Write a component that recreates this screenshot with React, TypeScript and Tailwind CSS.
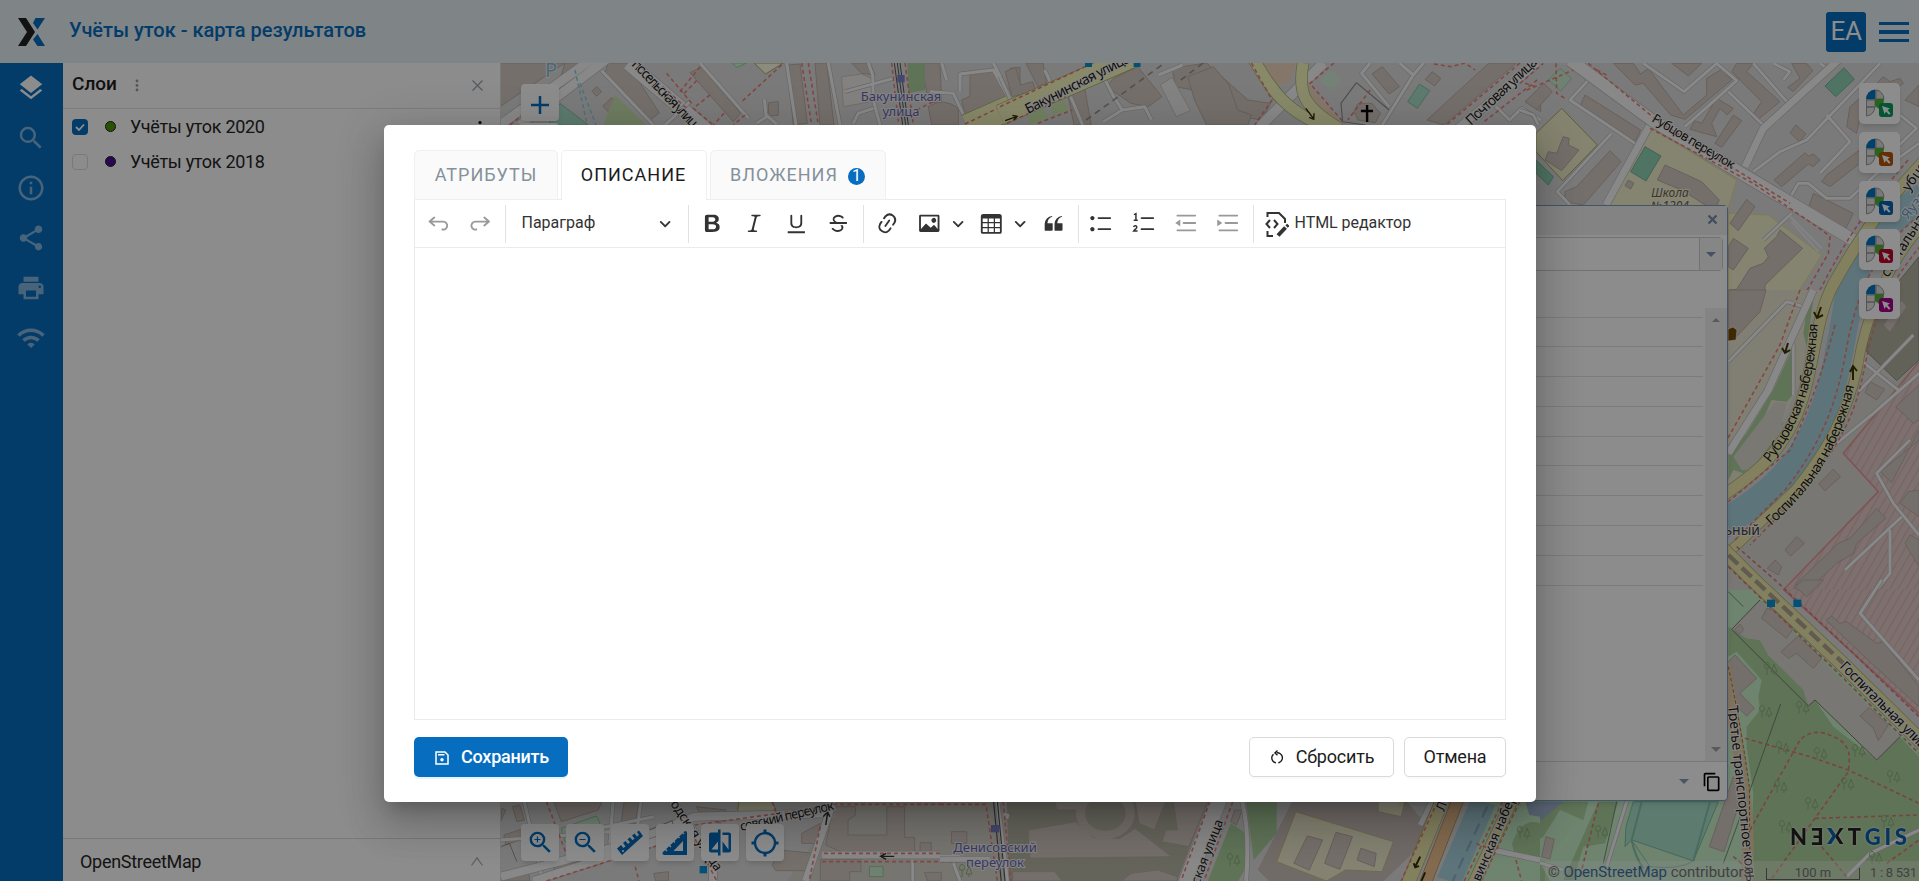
import React from "react";
import { MdLayers, MdSearch, MdInfoOutline, MdShare, MdPrint, MdWifi, MdContentCopy, MdZoomIn, MdZoomOut } from "react-icons/md";

type PathProps = { d: string };

/* ---------- map primitives ---------- */
const Building = ({ d }: PathProps) => <path d={d} fill="#d5cac3" stroke="#bdafa6" strokeWidth="1" vectorEffect="non-scaling-stroke" />;
const Area = ({ d, fill, stroke = "none" }: PathProps & { fill: string; stroke?: string }) => (
  <path d={d} fill={fill} stroke={stroke} strokeWidth="1" vectorEffect="non-scaling-stroke" />
);
const Road = ({ d, w = 3, fill = "#f8f8f8", casing = "#bdbdbd" }: PathProps & { w?: number; fill?: string; casing?: string }) => (
  <g fill="none" strokeLinejoin="round">
    <path d={d} stroke={casing} strokeWidth={w + 1.4} vectorEffect="non-scaling-stroke" />
    <path d={d} stroke={fill} strokeWidth={w} vectorEffect="non-scaling-stroke" />
  </g>
);
const Foot = ({ d, c = "#ee8179" }: PathProps & { c?: string }) => (
  <path d={d} fill="none" stroke={c} strokeWidth="1.6" strokeDasharray="4 3" vectorEffect="non-scaling-stroke" />
);
const Label = ({ x, y, r = 0, len, c = "#1c1c1c", size = 14, children, anchor = "start", italic = false }: {
  x: number; y: number; r?: number; len?: number; c?: string; size?: number; children: string; anchor?: "start" | "middle" | "end"; italic?: boolean;
}) => (
  <text x={x} y={y} transform={`rotate(${r} ${x} ${y})`} textLength={len} fontSize={size} fill={c} stroke="#f3f1ee" strokeWidth="2"
    paintOrder="stroke" textAnchor={anchor} fontStyle={italic ? "italic" : "normal"}>{children}</text>
);
const Tree = ({ x, y }: { x: number; y: number }) => (
  <path d={`M${x} ${y}v-7m-2 0a2.5 3.5 0 1 1 4 0zM${x + 7} ${y}v-3l-3 0 3-8 3 8h-3`} fill="none" stroke="#8fb481" strokeWidth="1" />
);

const northWest = "translate(500 60) scale(.33333)";
const north = "translate(1000 60) scale(.34437 .33333)";
const northEast = "translate(1520 0) scale(.33333)";
const east = "translate(1520 290) scale(.33333)";
const southEast = "translate(1520 580) scale(.33333)";
const southWest = "translate(380 700) scale(.36995 .33333)";
const south = "translate(940 700) scale(.38265 .33333)";

function MapCanvas() {
  return (
    <svg className="block h-full w-full" viewBox="501 63 1418 818" preserveAspectRatio="none" fontFamily="'Noto Sans', sans-serif">
      <defs>
        <path id="leftBank" d="M1770 463C1800 425 1815 385 1818 318" />
        <path id="rightBank" d="M1771 526C1818 485 1843 440 1855 382" />
        <pattern id="hatch" width="21" height="21" patternUnits="userSpaceOnUse" patternTransform="rotate(-60)">
          <rect width="21" height="21" fill="#e3ccc9" /><path d="M0 2H21" stroke="#d8b6b3" strokeWidth="3.5" />
        </pattern>
      </defs>
      <rect x="500" y="60" width="1419" height="821" fill="#e0dfdf" />

      <g transform={northWest}>
        <Building d="M0 9H195L0 140Z" />
        <Building d="M195 9H280L200 98 175 72Z" />
        <Building d="M380 9H325L315 38 445 185 478 158Z" />
        <Building d="M605 22L570 38 700 185 722 160Z" />
        <Building d="M290 80L305 95 290 109 276 94ZM335 113L360 138 335 165 308 139Z" />
        <Building d="M862 15L900 12 922 190 880 195ZM945 9H980L1002 195H960Z" />
        <Building d="M805 128L835 125V166L806 168ZM1055 9H1110L1125 45 1085 40Z" />
        <Building d="M1265 9H1320L1325 130 1285 125Z" />
        <Building d="M1410 38L1490 25 1540 110 1400 185 1385 120 1410 108ZM1530 25L1560 22V90Z" />
        <Building d="M1285 140Q1330 110 1375 145V195H1295Z" />
        <Area d="M1025 50L1085 42 1115 55V125L1030 140Z" fill="#efedea" stroke="#cfc5be" />
        <Area d="M345 105L440 195H310Z" fill="#c9e2b0" />
        <Area d="M1222 9H1275V90L1225 100Z" fill="#add19e" />
        <Area d="M150 185L180 130 265 195H145Z" fill="#aae0cb" stroke="#8cbfa8" />
        <Area d="M762 9L797 42 850 9Z" fill="#ffffe5" stroke="#aaa66a" />
        <Area d="M695 9L712 22 740 9Z" fill="#c8facc" stroke="#8fd39b" />
        <Road d="M0 195L300 -20M60 195L330 -10" w={9} />
        <Road d="M385 9L620 210" w={14} />
        <Road d="M305 32L460 195M600 9L745 175M495 195L570 125M793 118L798 165 830 192M770 190L800 170M860 9L888 195M985 9L1020 195" w={3} />
        <Road d="M1035 95L1180 55M1105 9L1118 45 1120 120 1140 195M1060 190L1075 160 1120 145M1325 9L1340 60M1380 95V42L1480 30 1540 140M1290 95L1360 100 1400 185M1480 9L1560 165" w={3} />
        <Road d="M1400 200L1560 130" w={24} fill="#f7fabf" casing="#a9b070" />
        <path d="M1183 9L1208 195M1192 9L1217 195M1200 9L1225 195" stroke="#555" strokeWidth="3" fill="none" />
        <Foot d="M410 9L560 145M600 20L540 95M500 40L575 130M590 62L548 105M630 105L580 145 640 195M672 160L640 195M735 165L700 195M845 15L725 125M905 9L935 195M925 9L955 195M1175 9L1195 185M1215 9L1240 195M1395 192L1555 115M1250 150L1300 125M30 195L120 120" />
        <Foot d="M225 30L262 195M240 70L288 195" c="#8fd0de" />
        <rect x="1192" y="45" width="22" height="22" fill="#7a82c8" />
      </g>
      <Label x={545} y={77} c="#84bfe0" size={20}>P</Label>
      <Label x={631} y={65} r={46} len={88}>посельская улиц</Label>
      <Label x={901} y={101} anchor="middle" c="#6468b8" size={13}>Бакунинская</Label>
      <Label x={901} y={116} anchor="middle" c="#6468b8" size={13}>улица</Label>

      <g transform={north}>
        <Building d="M15 35L45 22 60 75 95 65 105 95 35 110ZM75 9H125L135 70 110 80Z" />
        <Building d="M195 95L245 80 265 195H215ZM330 55L400 20 470 110 430 140 380 130 310 80Z" />
        <Building d="M500 25L600 9 720 120 785 130 760 180 640 160 560 90 510 80Z" />
        <Building d="M545 50L620 20 665 75 690 150 730 165 720 195H600L565 120Z" />
        <Building d="M1080 42L1110 20 1160 80 1130 102Z" />
        <Building d="M1240 180L1420 9H1500L1290 195Z" />
        <Building d="M1255 35L1280 55 1262 78 1235 58ZM1570 85L1525 125 1570 155Z" />
        <Building d="M1040 130L1080 130 1105 160 1090 188 1040 180 1028 155Z" />
        <Area d="M465 75L500 52 553 152 512 170Z" fill="#efefef" stroke="#cfc5be" />
        <Area d="M960 30L990 60 960 92 930 60Z" fill="#d2ecd9" />
        <Area d="M1218 72L1248 92 1212 145 1184 125Z" fill="#aae0cb" stroke="#8cbfa8" />
        <Area d="M145 140L185 120 200 150 155 170ZM80 165L125 145 145 175 85 195Z" fill="#cdebb0" />
        <Area d="M755 9H860L840 70 800 75ZM895 70L990 185H960L890 110Z" fill="#f1d9bf" />
        <path d="M1035 68L1130 150M1035 68L990 130 995 185 1060 195" stroke="#888" strokeWidth="3" fill="none" />
        <Road d="M0 50L35 130M130 30L150 75M205 110L240 195M300 50L330 110 355 150 300 185M355 150L420 140 440 180M460 45L530 15M1075 9L1050 40 1130 140M1160 9L1200 45 1110 195M1230 9L1200 45M1440 140L1480 180 1515 145 1570 180" w={3} />
        <Road d="M0 165L390 -10" w={20} fill="#f7fabf" casing="#a9b070" />
        <Road d="M870 80L750 205M940 9L890 60" w={10} />
        <Road d="M735 -5C790 90 830 160 960 205M880 9C865 100 880 140 985 205" w={11} fill="#f7fabf" casing="#a9b070" />
        <Road d="M1560 9L1330 205" w={8} />
        <path d="M250 180L470 15M525 60L590 9" stroke="#9b9490" strokeWidth="5" strokeDasharray="18 14" fill="none" />
        <Foot d="M0 140L270 9M20 190L190 110M110 190L210 150M730 9L790 120 740 195M970 9L900 70 1000 190M1075 90L1010 180M1260 12L1310 20 1350 9 1380 30M1510 9L1290 200M1560 60L1400 190M1525 70L1570 85" />
        <rect x="247" y="8" width="20" height="13" fill="#0092da" /><rect x="388" y="8" width="20" height="13" fill="#0092da" />
        <path d="M1066 135V186M1048 153H1083" stroke="#000" strokeWidth="7" />
        <path d="M15 182L48 170M36 166L50 169 40 180M888 145L910 175M898 172L911 178 912 160" stroke="#332a00" strokeWidth="4" fill="none" />
      </g>
      <Label x={1028} y={114} r={-27} len={116}>Бакунинская улица</Label>
      <Label x={1471} y={126} r={-43} len={92}>Почтовая улица</Label>

      <g transform={northEast}>
        <Area d="M395 385L650 540 620 640 745 645 905 765 820 900H625V640H250Z" fill="#f3f0cd" stroke="#e8df8e" />
        <Area d="M125 325L232 435 128 542 48 455V400Z" fill="#f3f0cd" stroke="#a8ac60" />
        <Building d="M280 190L340 190 362 222 385 205 490 345 560 285 560 235 605 208 635 240 495 358 452 345 370 250 345 255Z" />
        <Building d="M455 190H545L505 228ZM650 190H700L680 215 780 305 710 362 695 350 725 305 635 215Z" />
        <Building d="M815 190H860L878 212 820 275 803 262 840 235ZM195 285L362 390 345 425 182 315Z" />
        <Building d="M72 250L97 275 50 328 15 305ZM590 295L640 325 622 345 600 325 575 370 590 410 510 388 525 362 545 370ZM640 345L665 362 605 442 585 430Z" />
        <Building d="M828 375L858 402 838 425 810 398ZM762 540L855 458 865 468 880 462 900 480 880 500 865 492 785 560Z" />
        <Building d="M1025 445L1045 470 930 560 905 545 920 525Z" />
        <Building d="M270 452L303 485 190 615 135 605 135 575 170 560Z" />
        <Building d="M435 495L545 545 598 600 590 618H560L485 570 412 540Z" />
        <Building d="M880 580L960 620 1000 640 970 700 865 625ZM680 598L705 620 655 692 630 670Z" />
        <Building d="M640 715L685 745 640 810 625 800V740ZM780 690L848 745 735 855V900H625V870L650 868 690 805 730 790 745 770 733 745 770 710Z" />
        <Building d="M1060 260L1090 230 1110 245 1140 235 1150 250 1120 275 1070 262 1030 300 1010 400 980 380 990 320ZM1155 300L1197 255V320Z" />
        <Building d="M130 410L148 415 145 435 177 450 125 512 75 480 85 455 110 460ZM325 540L342 550 332 567 315 557Z" />
        <Area d="M375 440L423 468 378 543 332 515ZM972 203L1003 238 947 290 915 258ZM48 480L100 530 85 555 48 520Z" fill="#92d3b5" stroke="#76b69a" />
        <Area d="M120 205L155 235 122 273 85 240Z" fill="#c9ecd0" stroke="#9bd8a8" />
        <Road d="M210 235L150 300 345 430M275 400L112 575 150 615M370 190L492 275 590 190 650 242 495 380M625 275L740 385M700 190L805 310M700 515L780 455 860 420 1080 190M920 345L990 425 900 520M800 610L835 550 865 550 920 595 990 595 1065 525 1197 430M1140 345L1190 385 1060 510M900 190L920 205M760 190L810 215 790 240M0 330L40 345 55 375M730 720L815 640" w={2.8} />
        <Road d="M395 365L258 615M1010 130L730 385 675 500" w={7} />
        <Road d="M150 180L395 360 1000 720" w={12} />
        <Foot d="M205 190L415 365 810 610M390 385L700 550 905 690 930 710 925 760 845 900M0 250L70 190M20 270L160 210M108 190L110 280 135 295M230 210L260 225" />
        <path d="M805 645L905 745M815 665L895 755" stroke="#eee" strokeWidth="6" />
      </g>
      <Label x={1651} y={121} r={31} len={94} size={13}>Рубцов переулок</Label>
      <Label x={1670} y={197} anchor="middle" c="#72651f" size={12} italic>Школа</Label>
      <Label x={1670} y={210} anchor="middle" c="#72651f" size={12} italic>№1204</Label>

      <g transform={east}>
        <Area d="M625 0H920L860 120 850 250 760 460 625 590Z" fill="#ebe8d2" />
        <Building d="M625 0H738L720 65 640 150 625 110Z" />
        <Area d="M880 30L860 60 850 130 860 170ZM820 170L822 310 800 335 755 330 735 375 790 400 755 470 670 550 640 540 625 570V495L680 430 760 300Z" fill="#add19e" />
        <Area d="M765 335L800 340 780 430 690 540 665 540 640 500Z" fill="#dddad2" />
        <Area d="M1050 80L1197 -100V210L1130 272 1040 185Z" fill="#b5b2a0" stroke="#8b927b" />
        <Area d="M1015 210L1130 275 1197 220V610L790 900H625V790L740 700 950 430Z" fill="#dcd9d1" />
        <Area d="M1197 220L970 490 1075 605 790 900H1197Z" fill="url(#hatch)" />
        <path d="M1197 215L970 490 1075 605 790 900" fill="none" stroke="#e39b99" strokeWidth="5" />
        <Building d="M1050 275L1094 298 1070 330 1035 308ZM940 538L962 560 915 602 896 582ZM830 740L853 760 812 798 795 780Z" />
        <Building d="M765 810L785 830 775 855 742 835ZM1197 285V390L1180 400 1127 350ZM1197 420L1115 578 1082 545 1197 450Z" />
        <Building d="M1070 655L1097 685 1010 760 1000 790 950 820 865 900H825L830 880 955 760 990 745ZM1197 600V680L1140 640 1165 605ZM1197 750L1170 735 1155 760 1197 830ZM1145 30L1160 50 1110 127 1090 105Z" />
        <Road d="M820 160V315M1180 135L1015 305M1015 205L1135 300M1197 250L1060 370 950 460M1170 450L1070 550 1120 640 1197 735M1145 680L975 840M1110 720V850L1070 900" w={2.8} />
        <Road d="M625 215L800 35 850 50" w={2.8} />
        <Road d="M880 0L745 300 625 490" w={7} />
      </g>
      <path d="M1925 196C1880 228 1862 240 1850 290C1838 360 1832 420 1790 470C1765 500 1735 515 1700 540" stroke="#aad3df" strokeWidth="28" fill="none" />
      <Road d="M1925 160C1880 208 1858 240 1833 285C1812 325 1815 380 1792 425C1776 455 1758 475 1700 510" w={11} fill="#eeeaad" casing="#a9b070" />
      <Road d="M1925 222C1890 260 1865 315 1857 370C1848 410 1828 450 1795 490L1725 556" w={9} fill="#eeeaad" casing="#a9b070" />
      <Foot d="M1925 212C1885 240 1862 275 1848 340C1838 400 1824 440 1785 490L1735 540M1908 160C1870 205 1848 235 1820 290M1835 325C1820 380 1812 400 1790 450L1728 502M1925 240C1885 290 1876 310 1864 370C1852 430 1830 465 1750 545M1800 290L1780 345 1728 438" />
      <path d="M1821 307l-4 11m-3-6 3 6 6-3M1788 343l-3 10m-3-5 3 5 5-3M1853 380v-13m-3 5 3-6 4 5" stroke="#3c3500" strokeWidth="2" fill="none" />
      <path d="M1728 329l5-2 4 3-1 10-8 1z" fill="#734a08" stroke="#fff" strokeWidth=".6" />
      <g fontSize="14" fill="#1c1c1c" stroke="#f2efc0" strokeWidth="1.5" paintOrder="stroke">
        <text><textPath href="#leftBank" textLength="150">Рубцовская набережная</textPath></text>
        <text><textPath href="#rightBank" textLength="166">Госпитальная набережная</textPath></text>
      </g>
      <Label x={1760} y={535} anchor="end" c="#444" size={14}>Госпитальный</Label>
      <Label x={1909} y={192} r={-55} size={14}>убцовская</Label>
      <Label x={1908} y={220} r={-52} size={14} c="#6b9dc8">Яуза</Label>
      <Label x={1888} y={278} r={-58} size={14}>спитальная</Label>

      <g transform={southEast}>
        <Area d="M620 30H700L1197 500V903H0V640H620Z" fill="#c8f0ca" />
        <Area d="M625 140L680 175 720 180 745 225 770 250 850 300 885 360 940 440 1070 540 1140 470 1197 530V903H690L700 640 680 500 680 440 720 390 715 350 725 300 650 215 625 230Z" fill="#add19e" />
        <Area d="M720 60L635 148 680 175 720 180 745 225 850 330 865 378 885 360 1070 540 1140 470Z" fill="#dcd9d1" />
        <path d="M720 60L635 148 865 378 885 360 1070 540 1140 470" fill="none" stroke="#777b6d" strokeWidth="3" />
        <Area d="M790 28L1197 410V28Z" fill="url(#hatch)" />
        <path d="M790 28L1197 400" fill="none" stroke="#e39b99" strokeWidth="5" />
        <Building d="M740 85L760 90 820 145 800 175 725 115ZM835 168L905 235 880 265 830 220 805 235 783 215ZM1048 382L1105 435 1075 482 1060 445 1020 408Z" />
        <Building d="M645 225L710 295 660 340 703 385 680 408 625 355V245ZM660 132L672 148 658 163 643 150Z" />
        <Building d="M935 108L960 130 980 125 1070 190 1090 185 1197 320V380L1060 255 918 120ZM850 0H910L860 50 825 20Z" />
        <Building d="M640 590L670 630 612 815 568 800ZM78 770L103 778 90 837 65 830Z" />
        <Area d="M0 665H205L190 720 120 690 70 770 0 810ZM235 665H295L255 790 190 800 160 900H130ZM0 850L50 830 90 903H0Z" fill="#add19e" />
        <Area d="M35 665H130L65 720 30 700Z" fill="#a5b9d4" />
        <Area d="M340 665H595L520 843 335 780 315 800 318 740Z" fill="#aae0cb" stroke="#7fbf9e" />
        <path d="M365 665L335 780Q345 830 370 865M570 665L520 843" fill="none" stroke="#88c3ac" strokeWidth="6" />
        <Area d="M335 780L520 843Q480 870 390 860Z" fill="#c8f0ca" stroke="#88c3ac" />
        <path d="M782 372L690 630 610 850M625 35L670 80M290 665L250 850" stroke="#68796a" strokeWidth="2.5" fill="none" />
        <path d="M610 250Q650 450 670 620Q690 760 680 903" fill="none" stroke="#e6cfae" strokeWidth="36" />
        <path d="M625 260Q665 450 688 620L690 903" fill="none" stroke="#a2741a" strokeWidth="3" strokeDasharray="10 7" />
        <Road d="M1085 0L1020 100 1197 300M1197 750L1050 820 980 890M320 665L260 860M0 830L130 870" w={3} />
        <Road d="M600 -100L700 0 960 245 1230 510" w={14} fill="#eeeaad" casing="#a9b070" />
        <path d="M625 -75L720 15 970 250" fill="none" stroke="#afa591" strokeWidth="13" strokeDasharray="40 16" />
        <Foot d="M625 -40L940 265 1197 520M650 -100L765 0 1000 220 1197 410M675 475L870 530 985 570 1197 670M690 750L840 480Q880 440 940 470 990 490 988 540L985 575 885 715 750 903M885 715L1197 705M905 800L980 890M1100 850L1197 780M235 670L180 890M640 830L700 880" c="#dd7a78" />
        <rect x="741" y="59" width="24" height="22" fill="#0092da" /><rect x="820" y="59" width="24" height="22" fill="#0092da" />
      </g>
      <Tree x={1767} y={675} /><Tree x={1762} y={718} /><Tree x={1799} y={714} /><Tree x={1779} y={754} /><Tree x={1817} y={760} />
      <Tree x={1855} y={757} /><Tree x={1890} y={783} /><Tree x={1844} y={790} /><Tree x={1808} y={810} /><Tree x={1777} y={793} />
      <Tree x={1884} y={828} /><Tree x={1782} y={833} /><Tree x={1872} y={864} /><Tree x={1521} y={837} /><Tree x={1598} y={838} />
      <Label x={1839} y={667} r={45} len={125}>Госпитальная улица</Label>
      <Label x={1728} y={706} r={84} len={194} size={14}>Третье транспортное кольцо</Label>

      <g transform={southWest}>
        <Area d="M1230 305H1700V543H1100L1190 400Z" fill="#d8d5cc" />
        <Area d="M490 385L585 348 595 370 560 400 500 425Z" fill="#cdebcf" stroke="#8dcf98" />
        <Area d="M970 305H1060L1070 330 965 346Z" fill="#f6f3cf" stroke="#b1ae6e" />
        <Building d="M470 305H600L590 330 490 365ZM660 305H700L690 370 652 368ZM378 315L390 360 370 365 358 320ZM335 405L410 378 405 410 340 435ZM330 325L340 330 326 365Z" />
        <Building d="M470 490L570 465 560 485 470 520ZM415 440L440 430 420 480ZM327 520L400 500 405 543H327Z" />
        <Building d="M855 320L935 330 920 370 870 350ZM1060 495L1080 450 1175 460 1160 512 1070 512ZM1140 400L1190 370 1180 430H1140Z" />
        <Building d="M1225 320H1285V345L1265 360V405H1370V320H1418V412H1445V455H1245L1205 435ZM1460 428H1490V455H1460ZM1190 478H1300V515H1270V543H1190ZM1472 517H1517V543H1480ZM740 520L780 515V543H745Z" />
        <Area d="M1323 500H1360V530H1323Z" fill="#cdebcf" stroke="#8dcf98" />
        <Road d="M390 305L440 543M630 305L620 450M705 305L695 390M327 420L620 395M480 410L740 350M1440 480V543M1550 490L1568 543" w={3} />
        <Road d="M327 530L640 440 850 350 1225 340M415 543L840 390M790 305L900 480V543" w={8} />
        <Road d="M1225 305L1150 543M1195 465H1568" w={7} />
        <Foot d="M800 305L910 543M1190 380L1160 543M1225 313H1568M1195 485H1568M1200 460H1568M850 375L1210 320M450 543L840 405M690 500L700 543M450 305L510 480M1060 305L1070 335" />
        <rect x="864" y="498" width="20" height="22" fill="#0092da" />
        <path d="M1390 469H1355M1368 460L1353 469 1368 478M1205 375L1210 338M1198 350L1210 336 1216 350M880 480V490" stroke="#333" strokeWidth="4" fill="none" />
        <path d="M730 390L790 362 792 375M327 440L350 430 370 485" stroke="#777" strokeWidth="2" fill="none" />
      </g>
      <Label x={670} y={804} r={56} len={82} size={13}>одская улица</Label>
      <Label x={741} y={831} r={-13} len={96} size={13}>совский переулок</Label>

      <g transform={south}>
        <Area d="M175 305H700L620 543H180Z" fill="#b9b6a6" />
        <Area d="M0 305H130V465H0Z" fill="#d8d5cc" />
        <Building d="M230 390L355 365 400 412 470 415 510 385 605 470 235 475ZM300 305H365L370 330 305 330ZM510 305H590L560 390 520 370ZM610 305H700L650 440 580 425 590 390H620ZM30 395H70V430H30ZM190 515H300L320 543H190ZM475 543L500 520 570 510 620 530V543Z" />
        <ellipse cx="432" cy="340" rx="65" ry="65" fill="none" stroke="#d3c8c0" strokeWidth="24" />
        <Area d="M800 305H880V400L820 480ZM760 370L800 400 800 500 780 543H700Z" fill="#add19e" />
        <Area d="M920 305H1220L1290 400 1160 543H860L830 510Z" fill="#cec3bd" />
        <Area d="M930 335L1185 425 1155 515 1060 510 1010 543 880 485ZM1145 305H1215L1205 350 1145 335Z" fill="#f1eed0" stroke="#ccc08f" />
        <Building d="M960 408L1000 420 965 510 925 490ZM1035 397L1078 410 1045 508 1005 490ZM1100 445L1140 460 1135 500 1090 480ZM770 330H790L775 375 760 365Z" />
        <Area d="M1400 305H1568V543H1350Z" fill="#c8f0ca" />
        <Area d="M1530 305H1568V350L1540 345Z" fill="#a5b9d4" />
        <Area d="M1495 430Q1520 350 1568 370V480L1500 460Z" fill="#add19e" />
        <path d="M1420 305L1330 543" stroke="#aad3df" strokeWidth="66" />
        <path d="M1430 320L1340 543" stroke="#8db2c2" strokeWidth="6" strokeDasharray="35 20" />
        <Road d="M0 478H130M165 345L180 350M1445 450L1568 480M1285 305L1255 375" w={5} />
        <Road d="M790 305Q810 400 800 543M150 305L175 543" w={4} />
        <Road d="M735 280L640 560" w={16} />
        <Road d="M1320 280L1220 560" w={13} fill="#eeeaad" casing="#a9b070" />
        <Road d="M1360 280L1265 560" w={11} fill="#efc391" casing="#b28b56" />
        <Road d="M1500 290L1390 560" w={11} fill="#eeeaad" casing="#a9b070" />
        <path d="M140 305L160 543M150 305L170 543" stroke="#555" strokeWidth="3" fill="none" />
        <rect x="133" y="375" width="22" height="22" fill="#7a82c8" />
        <Foot d="M0 313H120L150 543M165 305L185 543M705 305L630 543M765 305L690 543M1300 305L1205 543M1470 305L1370 543M1515 305L1415 543M1445 450L1400 430M1505 480L1520 543" />
        <path d="M1255 470L1242 500M1238 490L1242 502 1252 498M1268 517L1258 543" stroke="#332a00" strokeWidth="5" fill="none" />
      </g>
      <Label x={995} y={852} anchor="middle" c="#6468b8" size={13}>Денисовский</Label>
      <Label x={995} y={867} anchor="middle" c="#6468b8" size={13}>переулок</Label>
      <Label x={1199} y={885} r={-69} size={13}>ская улица</Label>
      <Label x={1444} y={812} r={-69} size={13}>Лефортовская</Label>
      <Label x={1480} y={882} r={-67} size={13}>винская набережная</Label>
      <Tree x={1230} y={866} /><Tree x={1520} y={839} /><Tree x={962} y={877} />
    </svg>
  );
}

/* ---------- editor icons ---------- */
const icons: Record<string, string> = {
  undo: "m5.042 9.367 2.189 1.837a.75.75 0 0 1-.965 1.149l-3.788-3.18a.747.747 0 0 1-.21-.284.75.75 0 0 1 .17-.945L6.23 4.762a.75.75 0 1 1 .964 1.15L4.863 7.866h8.917A.75.75 0 0 1 14 7.9a4 4 0 1 1-1.477 7.718l.344-1.489a2.5 2.5 0 1 0 1.094-4.73l.008-.032H5.042z",
  redo: "m14.958 9.367-2.189 1.837a.75.75 0 0 0 .965 1.149l3.788-3.18a.747.747 0 0 0 .21-.284.75.75 0 0 0-.17-.945L13.77 4.762a.75.75 0 1 0-.964 1.15l2.331 1.955H6.22A.75.75 0 0 0 6 7.9a4 4 0 1 0 1.477 7.718l-.344-1.489A2.5 2.5 0 1 1 6.039 9.4l-.008-.032h8.927z",
  bold: "M10.187 17H5.773c-.637 0-1.092-.138-1.364-.415-.273-.277-.409-.718-.409-1.323V4.738c0-.617.14-1.062.419-1.332.279-.27.73-.406 1.354-.406h4.68c.69 0 1.288.041 1.793.124.506.083.96.242 1.36.478.341.197.644.447.906.75a3.262 3.262 0 0 1 .808 2.162c0 1.401-.722 2.426-2.167 3.075C15.05 10.175 16 11.315 16 13.01a3.756 3.756 0 0 1-2.296 3.504 6.1 6.1 0 0 1-1.517.377c-.571.073-1.238.11-2 .11zm-.217-6.217H7v4.087h3.069c1.977 0 2.965-.69 2.965-2.072 0-.707-.256-1.22-.768-1.537-.512-.319-1.277-.478-2.296-.478zM7 5.13v3.619h2.606c.729 0 1.292-.067 1.69-.2a1.6 1.6 0 0 0 .91-.765c.165-.267.247-.566.247-.897 0-.707-.26-1.176-.778-1.409-.519-.232-1.31-.348-2.375-.348H7z",
  italic: "m9.586 14.633.021.004c-.036.335.095.655.393.962.082.083.173.15.274.201h1.474a.6.6 0 1 1 0 1.2H5.304a.6.6 0 0 1 0-1.2h1.15c.474-.07.809-.182 1.005-.334.157-.122.291-.32.404-.597l2.416-9.55a1.053 1.053 0 0 0-.281-.823 1.12 1.12 0 0 0-.442-.296H8.15a.6.6 0 0 1 0-1.2h6.443a.6.6 0 1 1 0 1.2h-1.195c-.376.056-.65.155-.823.296-.215.175-.423.439-.623.79l-2.366 9.347z",
  underline: "M3 18v-1.5h14V18zm2.2-8V3.6c0-.4.4-.6.8-.6.3 0 .7.2.7.6v6.2c0 2 1.3 2.8 3.2 2.8 1.9 0 3.4-.9 3.4-2.9V3.6c0-.3.4-.5.8-.5.3 0 .7.2.7.5V10c0 2.7-2.2 4-4.9 4-2.6 0-4.7-1.2-4.7-4z",
  strike: "M7 16.4c-.8-.4-1.5-.9-2.2-1.5a.6.6 0 0 1-.2-.5l.3-.6h1c1 1.2 2.1 1.7 3.7 1.7 1 0 1.8-.3 2.3-.6.6-.4.6-1.2.6-1.3.2-1.2-.9-2.1-.9-2.1h2.1c.3.7.4 1.2.4 1.7v.8l-.6 1.2c-.6.8-1.1 1-1.6 1.2a6 6 0 0 1-2.4.6c-1 0-1.8-.3-2.5-.6zM6.8 9L6 8.3c-.4-.5-.5-.8-.5-1.6 0-.7.1-1.3.5-1.8.4-.6 1-1 1.6-1.3a6.3 6.3 0 0 1 4.7 0 4 4 0 0 1 1.7 1l.3.7c0 .1.2.4-.2.7-.4.2-.9.1-1 0a3 3 0 0 0-1.2-1c-.4-.2-1-.3-2-.4-.7 0-1.4.2-2 .6-.8.4-1 .8-1 1.7 0 .5.4 1 1 1.4.1.2.5.4.9.6H6.8zM3 10.5V9h14v1.5z",
  link: "m11.077 15 .991-1.416a.75.75 0 1 1 1.229.86l-1.148 1.64a.748.748 0 0 1-.217.206 5.251 5.251 0 0 1-8.503-5.955.741.741 0 0 1 .12-.274l1.147-1.639a.75.75 0 1 1 1.228.86L4.933 10.7l.006.003a3.75 3.75 0 0 0 6.132 4.294l.006.004zm5.494-5.335a.748.748 0 0 1-.12.274l-1.147 1.639a.75.75 0 1 1-1.228-.86l.86-1.23a3.75 3.75 0 0 0-6.144-4.301l-.86 1.229a.75.75 0 0 1-1.229-.86l1.148-1.64a.748.748 0 0 1 .217-.206 5.251 5.251 0 0 1 8.503 5.955zm-4.563-2.532a.75.75 0 0 1 .184 1.045l-3.155 4.505a.75.75 0 1 1-1.229-.86l3.155-4.506a.75.75 0 0 1 1.045-.184z",
  image: "M6.91 10.54c.26-.23.64-.21.88.03l3.36 3.14 2.23-2.06a.64.64 0 0 1 .87 0l2.52 2.97V4.5H3.2v10.12l3.71-4.08zm10.27-7.51c.6 0 1.09.47 1.09 1.05v11.84c0 .59-.49 1.06-1.09 1.06H2.79c-.6 0-1.09-.47-1.09-1.06V4.08c0-.58.49-1.05 1.1-1.05h14.38zm-5.22 5.56a1.96 1.96 0 1 1 3.4-1.96 1.96 1.96 0 0 1-3.4 1.96z",
  table: "M3 6v3h4V6H3zm0 4v3h4v-3H3zm0 4v3h4v-3H3zm5 3h4v-3H8v3zm5 0h4v-3h-4v3zm4-4v-3h-4v3h4zm0-4V6h-4v3h4zm1.5 8a1.5 1.5 0 0 1-1.5 1.5H3A1.5 1.5 0 0 1 1.5 17V4c.222-.863 1.068-1.5 2-1.5h13c.932 0 1.778.637 2 1.5v13zM12 13v-3H8v3h4zm0-4V6H8v3h4z",
  quote: "M3 10.423a6.5 6.5 0 0 1 6.056-6.408l.038.67C6.448 5.423 5.354 7.663 5.22 10H9c.552 0 .5.432.5.986v4.511c0 .554-.448.503-1 .503h-5c-.552 0-.5-.449-.5-1.003v-4.574zm8 0a6.5 6.5 0 0 1 6.056-6.408l.038.67c-2.646.739-3.74 2.979-3.873 5.315H17c.552 0 .5.432.5.986v4.511c0 .554-.448.503-1 .503h-5c-.552 0-.5-.449-.5-1.003v-4.574z",
  bullets: "M7 5.75c0 .414.336.75.75.75h9.5a.75.75 0 1 0 0-1.5h-9.5a.75.75 0 0 0-.75.75zm-6 0C1 4.784 1.777 4 2.75 4c.966 0 1.75.777 1.75 1.75 0 .966-.777 1.75-1.75 1.75C1.784 7.5 1 6.723 1 5.75zm6 9c0 .414.336.75.75.75h9.5a.75.75 0 1 0 0-1.5h-9.5a.75.75 0 0 0-.75.75zm-6 0c0-.966.777-1.75 1.75-1.75.966 0 1.75.777 1.75 1.75 0 .966-.777 1.75-1.75 1.75-.966 0-1.75-.777-1.75-1.75z",
  outdent: "M2 3.75c0 .414.336.75.75.75h14.5a.75.75 0 1 0 0-1.5H2.75a.75.75 0 0 0-.75.75zm5 6c0 .414.336.75.75.75h9.5a.75.75 0 1 0 0-1.5h-9.5a.75.75 0 0 0-.75.75zM2.75 16.5h14.5a.75.75 0 1 0 0-1.5H2.75a.75.75 0 1 0 0 1.5zM1 9.75 5.1 7v5.5z",
  indent: "M2 3.75c0 .414.336.75.75.75h14.5a.75.75 0 1 0 0-1.5H2.75a.75.75 0 0 0-.75.75zm5 6c0 .414.336.75.75.75h9.5a.75.75 0 1 0 0-1.5h-9.5a.75.75 0 0 0-.75.75zM2.75 16.5h14.5a.75.75 0 1 0 0-1.5H2.75a.75.75 0 1 0 0 1.5zM1 7v5.5L5.1 9.75z",
};

const Tool = ({ name, muted = false }: { name: string; muted?: boolean }) => (
  <button className="flex w-[42px] shrink-0 items-center justify-center">
    <svg viewBox="0 0 20 20" className={muted ? "size-[24.6px] fill-[#999]" : "size-[24.6px] fill-[#333]"}><path d={icons[name]} /></svg>
  </button>
);
const Chevron = () => (
  <svg viewBox="0 0 10 10" className="size-[12.3px] fill-[#333]">
    <path d="M.941 4.523a.75.75 0 1 1 1.06-1.06l3.006 3.005 3.005-3.005a.75.75 0 1 1 1.06 1.06l-3.549 3.55a.75.75 0 0 1-1.168-.136L.941 4.523z" />
  </svg>
);
const Sep = () => (
  <div className="flex w-[7px] shrink-0 justify-center"><div className="h-[38px] w-px bg-[#e2e2e2]" /></div>
);

function Toolbar() {
  return (
    <div className="flex h-[48px] items-center border-b border-[#ebebeb] pl-[3px] text-[#333]">
      <Tool name="undo" muted /><Tool name="redo" muted /><Sep />
      <div className="flex w-[176px] shrink-0 items-center justify-between pr-[13px] pl-[13px] text-[16px]">
        <span className="-mt-[2px]">Параграф</span><Chevron />
      </div>
      <Sep /><Tool name="bold" /><Tool name="italic" /><Tool name="underline" /><Tool name="strike" /><Sep />
      <Tool name="link" /><Tool name="image" /><div className="mr-[3px] flex w-[16px] shrink-0 justify-center"><Chevron /></div>
      <div className="flex w-[43px] shrink-0 justify-end"><Tool name="table" /></div>
      <div className="mr-[4px] flex w-[16px] shrink-0 justify-center"><Chevron /></div>
      <Tool name="quote" /><Sep /><div className="-ml-[1px] flex"><Tool name="bullets" /></div>
      <button className="flex w-[43px] shrink-0 items-center justify-center">
        <svg viewBox="0 0 20 20" className="size-[24.6px] fill-[#333]">
          <path d="M7 5.75c0 .414.336.75.75.75h9.5a.75.75 0 1 0 0-1.5h-9.5a.75.75 0 0 0-.75.75zm0 9c0 .414.336.75.75.75h9.5a.75.75 0 1 0 0-1.5h-9.5a.75.75 0 0 0-.75.75z" />
          <path d="M1.6 2.9 3.2 2.2v5.3M1.4 7.5H4.7M1.3 13c.5-1.5 2.8-1.2 2.6.2-.1 1-1.8 1.9-2.6 3.1h3.2" fill="none" stroke="#333" strokeWidth="1.2" />
        </svg>
      </button>
      <Tool name="outdent" muted /><Tool name="indent" muted /><Sep />
      <div className="flex w-[40px] shrink-0 justify-center">
        <svg viewBox="0 0 24 26" className="h-[26px] w-[24px]" fill="none" stroke="#333" strokeWidth="2">
          <path d="M2.500 6V2H14L20 8V12M2.500 20V25H8" />
          <path d="M5 9 1.500 13 5 17M9 9 12.500 13 9 17" />
          <path d="M13 24.500 20.500 16.500" strokeWidth="4" /><path d="M21.300 13.500 23.500 15.800" strokeWidth="2.500" />
        </svg>
      </div>
      <span className="-mt-[2px] -ml-[2px] text-[16px] tracking-[-0.05px]">HTML редактор</span>
    </div>
  );
}

function Dialog() {
  return (
    <div className="absolute inset-0 flex items-start justify-center bg-black/45 pt-[125px]">
      <div className="flex h-[677px] w-[1152px] flex-col rounded-[5px] bg-white px-[30px] pt-[25px] shadow-[0_11px_15px_-7px_rgba(0,0,0,0.2),0_24px_38px_3px_rgba(0,0,0,0.14),0_9px_46px_8px_rgba(0,0,0,0.12)]">
        <div className="relative z-10 -mb-px flex h-[50px] text-[18px] tracking-[1px] text-[#84919b]">
          <div className="mr-[3px] flex w-[144px] items-center justify-center rounded-t-[5px] border border-[#efefef] bg-[#fafafa] pb-[2px] pl-[1px]">АТРИБУТЫ</div>
          <div className="mr-[3px] flex w-[146px] items-center justify-center rounded-t-[5px] border border-b-0 border-[#efefef] bg-white pb-[3px] text-[#1c1c1c]">ОПИСАНИЕ</div>
          <div className="flex w-[176px] items-center justify-center gap-[10px] rounded-t-[5px] border border-[#efefef] bg-[#fafafa] pb-[2px]">
            ВЛОЖЕНИЯ<span className="mt-[4px] flex size-[17px] items-center justify-center rounded-full bg-[#076dbf] text-[16px] tracking-normal text-white">1</span>
          </div>
        </div>
        <div className="h-[521px] border border-[#ebebeb]"><Toolbar /></div>
        <div className="mt-[17px] flex h-[40px] gap-[10px] text-[18px]">
          <button className="mr-auto flex w-[154px] items-center justify-center gap-[12px] rounded-[5px] bg-[#076dbf] pb-[2px] pl-[3px] font-medium tracking-[-0.25px] text-white shadow-[0_2px_0_rgba(5,145,255,0.1)]">
            <svg viewBox="0 0 14 14" className="mt-[3px] size-[14px]" fill="none" stroke="currentColor" strokeWidth="1.500">
              <path d="M1 1H10L13 4V13H1ZM3 3.800H9.500" /><circle cx="7" cy="8.700" r="1.700" fill="currentColor" stroke="none" />
            </svg>
            Сохранить
          </button>
          <button className="flex w-[145px] items-center justify-center gap-[12px] rounded-[5px] border border-[#d9d9d9] pb-[2px] pl-[2px] tracking-[-0.2px] text-[#1c1c1c] shadow-[0_2px_0_rgba(0,0,0,0.02)]">
            <svg viewBox="0 0 14 15" className="mt-[2px] h-[15px] w-[14px]" fill="none" stroke="currentColor" strokeWidth="1.400">
              <path d="M6.500 2.900A5 5 0 0 1 8.300 12.800M6 12.900A5 5 0 0 1 3.500 4.200" /><path d="M7.500 .5 4.900 2.900 7.500 5.300" />
            </svg>
            Сбросить
          </button>
          <button className="w-[102px] rounded-[5px] border border-[#d9d9d9] pb-[2px] pl-[1px] tracking-[-0.2px] text-[#1c1c1c] shadow-[0_2px_0_rgba(0,0,0,0.02)]">Отмена</button>
        </div>
      </div>
    </div>
  );
}

/* ---------- background page ---------- */
const XLogo = ({ className }: { className: string }) => (
  <svg viewBox="0 0 27 28" className={className} preserveAspectRatio="none">
    <path d="M0 0H8L17 14 8 28H0L9 14Z" fill="#222" /><path d="M17.500 0H27L19.500 11.500 15 5ZM19.500 16 27 28H19.500L15 21.500Z" fill="#076dbf" />
  </svg>
);
const XMark = () => (
  <svg viewBox="0 0 16 16" className="h-[16px] w-[17px]" preserveAspectRatio="none">
    <path d="M12 0H15.500L10.500 7.500 15.500 16H12L7.500 8.500Z" fill="#222" /><path d="M0 0H4L9 8 4 16H0L5 8Z" fill="#0b5fae" />
  </svg>
);

const IdentifyButton = ({ cls }: { cls: string }) => (
  <div className="h-[41px] w-[41px] rounded-[5px] bg-white p-[6px] shadow-md">
    <svg viewBox="0 0 29 29" className="size-[29px]">
      <path d="M10.500 0.500A9.500 9.500 0 0 0 1 10.500H10.500Z" fill="#0474c0" /><path d="M11 1A8.500 9.500 0 0 1 19 10H11Z" fill="#ddd" stroke="#999" />
      <path d="M1.500 11H10V18H1.500ZM1.500 18H10Q9 26 1.500 27Z" fill="#e6e6e6" stroke="#999" /><path d="M10 10H19Q19 17 14 20L10 17Z" fill="#53b336" />
      <rect x="14" y="14" width="14" height="14" rx="3" className={cls} />
      <path d="M17 17 25 19.500 22.500 21 25.500 24.500 24 25.800 21 22.500 19.500 25Z" fill="#fff" />
    </svg>
  </div>
);

const MapButton = ({ children }: { children?: React.ReactNode }) => (
  <div className="flex h-[37px] w-[38px] items-center justify-center rounded-[4px] bg-white text-[#076dbf] shadow-md">{children}</div>
);

const rowHeights = ["h-[40px]", "h-[29px]", "h-[30px]", "h-[30px]", "h-[30px]", "h-[29px]", "h-[30px]", "h-[30px]", "h-[30px]", "h-[30px]"];

function FeaturePopup() {
  return (
    <div className="absolute top-[142px] left-[898px] flex h-[596px] w-[329px] flex-col rounded-[4px] border border-[#759dc0] bg-white shadow-md">
      <div className="flex h-[29px] shrink-0 items-center justify-end bg-[#efefef] pr-[9px] pb-[2px]">
        <svg viewBox="0 0 10 9" className="h-[9px] w-[11px]"><path d="M1 .5 9 8.500M9 .5 1 8.500" stroke="#7a8ca8" strokeWidth="2.300" /></svg>
      </div>
      <div className="mt-[2px] mr-[4px] flex h-[34px] shrink-0 rounded-[4px] border border-[#cfcfcf]">
        <div className="flex-1" />
        <div className="flex w-[23px] items-center justify-center border-l border-[#cfcfcf] bg-[#f4f4f4]"><div className="border-x-[5px] border-t-[5px] border-x-transparent border-t-[#7f93b5]" /></div>
      </div>
      <div className="mt-[37px] flex h-[454px] shrink-0 border-b border-[#dadada]">
        <div className="-mt-[30px] flex-1 pr-[2px]">
          {rowHeights.map((h, i) => <div key={i} className={`${h} border-b border-[#e2e2e2]`} />)}
        </div>
        <div className="flex w-[22px] flex-col items-center justify-between bg-[#f0f0f0] pt-[10px] pb-[9px]">
          <div className="border-x-[4px] border-b-[4px] border-x-transparent border-b-[#a3a3a3]" />
          <div className="border-x-[5px] border-t-[5px] border-x-transparent border-t-[#a3a3a3]" />
        </div>
      </div>
      <div className="flex flex-1 items-center justify-end gap-[13px] pr-[5px]">
        <div className="border-x-[5px] border-t-[5px] border-x-transparent border-t-[#8a9bb8]" />
        <MdContentCopy className="mt-[2px] size-[20px] text-black" />
      </div>
    </div>
  );
}

const sideIcons = [MdSearch, MdInfoOutline, MdShare, MdPrint, MdWifi];

export default function App() {
  return (
    <div className="relative flex h-[881px] w-full flex-col overflow-hidden bg-white font-['Roboto',sans-serif] leading-normal">
      <header className="flex h-[63px] shrink-0 items-center bg-[#e8f0f6] pr-[10px] pl-[18px]">
        <XLogo className="h-[28px] w-[27px]" />
        <h1 className="-mt-[4px] ml-[24px] flex-1 text-[20px] font-medium text-[#076dbf]">Учёты уток - карта результатов</h1>
        <div className="mr-[13px] flex size-[40px] items-center justify-center rounded-[3px] bg-[#076dbf] text-[26px] tracking-[-0.4px] text-white">EA</div>
        <div className="flex h-[20px] w-[30px] flex-col justify-between"><i className="h-[3px] bg-[#076dbf]" /><i className="h-[4px] bg-[#076dbf]" /><i className="h-[3px] bg-[#076dbf]" /></div>
      </header>
      <div className="flex min-h-0 flex-1">
        <nav className="flex w-[63px] shrink-0 flex-col items-center gap-[20px] bg-[#076dbf] pt-[10px] pr-[1px] text-white/50">
          <MdLayers className="size-[30px] shrink-0 text-white" />
          {sideIcons.map((Icon, i) => <Icon key={i} className="size-[30px] shrink-0" />)}
        </nav>
        <aside className="flex w-[438px] shrink-0 flex-col border-r border-[#ddd]">
          <div className="flex h-[46px] shrink-0 items-center border-b border-[#e2e2e2] pr-[17px] pl-[9px]">
            <div className="flex flex-1 items-center gap-[18px] text-[19px] font-medium text-[#1c1c1c]">
              <span className="-mt-[2px]">Слои</span>
              <svg viewBox="0 0 4 13" className="h-[13px] w-[4px] fill-[#94a0a8]"><circle cx="2" cy="2" r="1.400" /><circle cx="2" cy="6.500" r="1.400" /><circle cx="2" cy="11" r="1.400" /></svg>
            </div>
            <svg viewBox="0 0 11 11" className="size-[11px]"><path d="M.5 .5 10.500 10.500M10.500 .5 .5 10.500" stroke="#99a3ab" strokeWidth="1.200" /></svg>
          </div>
          <div className="flex h-[35px] items-center pl-[9px] text-[18px] tracking-[-0.3px] text-[#262626]">
            <span className="flex size-[16px] items-center justify-center rounded-[4px] bg-[#076dbf]"><svg viewBox="0 0 10 8" className="h-[8px] w-[10px]"><path d="M1 4 4 7 9 1.500" fill="none" stroke="#fff" strokeWidth="1.800" /></svg></span>
            <span className="mr-[14px] ml-[17px] size-[11px] rounded-full border border-[#222] bg-[#4c9405]" />
            <span className="flex-1">Учёты уток 2020</span>
            <svg viewBox="0 0 4 13" className="mr-[18px] h-[13px] w-[4px]"><circle cx="2" cy="2.500" r="1.600" /><circle cx="2" cy="8" r="1.600" /></svg>
          </div>
          <div className="flex h-[35px] items-center pl-[9px] text-[18px] tracking-[-0.3px] text-[#262626]">
            <span className="size-[16px] rounded-[4px] border border-[#dcdcdc]" />
            <span className="mr-[14px] ml-[17px] size-[11px] rounded-full border border-[#222] bg-[#4c0c94]" />Учёты уток 2018
          </div>
          <div className="mt-auto flex h-[43px] items-center justify-between border-t border-[#dadada] pt-[2px] pr-[17px] pl-[17px] text-[18px] tracking-[-0.3px] text-[#262626]">
            OpenStreetMap
            <svg viewBox="0 0 12 9" className="h-[9px] w-[12px]"><path d="M.5 8.500 6 .8 11.500 8.500" fill="none" stroke="#aaa" strokeWidth="1.200" /></svg>
          </div>
        </aside>
        <main className="relative min-w-0 flex-1 overflow-hidden">
          <MapCanvas />
          <div className="absolute top-[21px] left-[20px] flex flex-col gap-[2px]">
            <MapButton><svg viewBox="0 0 18 18" className="mt-[4px] size-[18px]"><path d="M9 0V18M0 9H18" stroke="currentColor" strokeWidth="2.500" /></svg></MapButton>
            <MapButton />
          </div>
          <div className="absolute top-[20px] right-[19px] flex flex-col gap-[7.8px]">
            <IdentifyButton cls="fill-[#079c60]" /><IdentifyButton cls="fill-[#b8560a]" /><IdentifyButton cls="fill-[#0565b8]" /><IdentifyButton cls="fill-[#c0062b]" /><IdentifyButton cls="fill-[#a8058c]" />
          </div>
          <FeaturePopup />
          <div className="absolute bottom-[20px] left-[20px] flex gap-[7px]">
            <MapButton><MdZoomIn className="size-[29px]" /></MapButton>
            <MapButton><MdZoomOut className="size-[29px]" /></MapButton>
            <MapButton><svg viewBox="0 0 26 26" className="size-[26px]"><path d="M0 18.500 4 15l2.500 3 2-1.700L6 13l2.500-2 2.500 3 2-1.700-2.500-3 2.500-2 2.500 3 2-1.700L15 5.600l2.500-2L20 6.500 22 5 20 2 22 .5 26 6 5 25Z" fill="currentColor" /><circle cx="6" cy="21" r="1" fill="#fff" /></svg></MapButton>
            <MapButton><svg viewBox="0 0 26 26" className="size-[26px]"><path d="M23 1Q25 1 25 3V25H2Q-.5 24 1 22ZM21 11 11.500 21H21Z" fill="currentColor" fillRule="evenodd" /><path d="M3 19l2 2M7 15l2 2M11 10.500l2 2M15.500 6l2 2M20 2l2 2" stroke="#fff" strokeWidth="1.500" /></svg></MapButton>
            <MapButton><svg viewBox="0 0 24 26" className="h-[27px] w-[24px]"><path d="M10 3H3Q1 3 1 5V21Q1 23 3 23H10V26H12.500V0H10ZM3.500 20 10 12V20ZM14.500 3H21Q23 3 23 5V21Q23 23 21 23H14.500V12L20.500 20V5.500H14.500Z" fill="currentColor" fillRule="evenodd" /></svg></MapButton>
            <MapButton><svg viewBox="0 0 28 28" className="size-[28px]" fill="none" stroke="currentColor" strokeWidth="2.300"><circle cx="14" cy="14" r="10" /><path d="M14 .5V5M14 23V27.500M.5 14H5M23 14H27.500" strokeWidth="3" /></svg></MapButton>
          </div>
          <div className="absolute right-[12px] bottom-[33px] flex h-[24px] w-[117px] items-center justify-between font-['Lato',sans-serif] text-[22px] font-black drop-shadow-[0_0_1px_white]">
            <span className="text-[#222]">N</span><span className="inline-block -scale-x-100 text-[#222]">E</span><XMark /><span className="text-[#222]">T</span>
            <span className="text-[#0b5fae]">G</span><span className="text-[#0b5fae]">I</span><span className="text-[#0b5fae]">S</span>
          </div>
          <div className="absolute right-0 bottom-0 flex h-[20px] items-center bg-white/30 text-[15px] text-[#777]">
            <div className="w-[221px] pt-[2px] pl-[3px] tracking-[-0.05px] whitespace-nowrap">© <span className="text-[#4672a8]">OpenStreetMap</span> contributors.</div>
            <div className="mb-[1px] h-[12px] w-[94px] self-end border border-t-0 border-[#666] text-center text-[13px] leading-[9px]">100 m</div>
            <div className="w-[59px] pt-[4px] pl-[10px] text-[13px] tracking-[-0.3px] whitespace-nowrap">1 : 8 531</div>
          </div>
        </main>
      </div>
      <Dialog />
    </div>
  );
}
